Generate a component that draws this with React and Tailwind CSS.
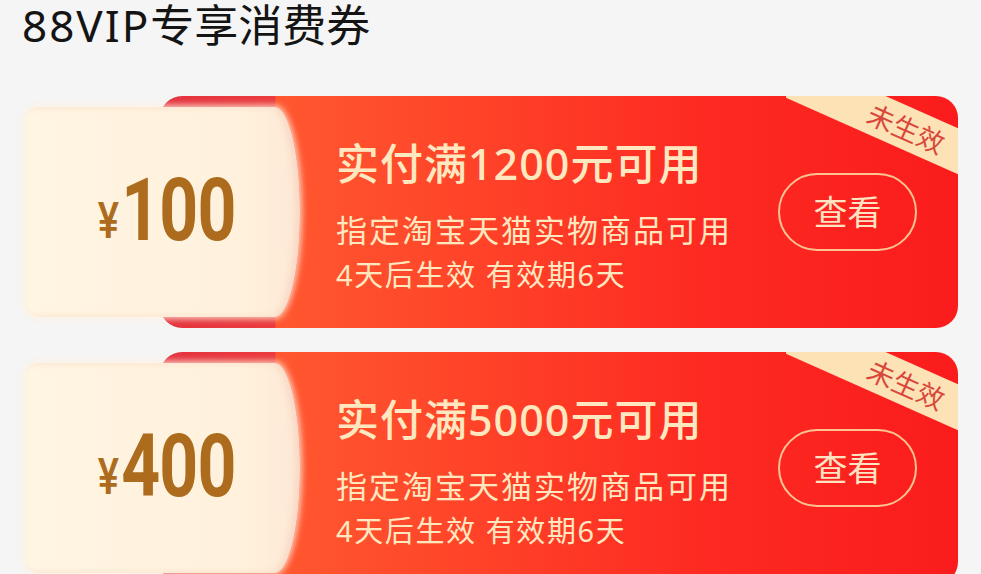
import React from 'react';

const coupons = [
  { amount: '100', threshold: '1200' },
  { amount: '400', threshold: '5000' },
];

function Ribbon() {
  return (
    <div className="absolute top-0 right-0 w-[172px] h-[82px] overflow-hidden rounded-tr-[22px] pointer-events-none">
      <div className="absolute left-[-12px] top-[8px] w-[250px] h-[42px] rotate-[24deg] bg-[#fde2b6] flex items-center justify-center">
        <span className="ml-[16px] text-[27px] leading-none text-[#d8473a]">未生效</span>
      </div>
    </div>
  );
}

function Coupon({ amount, threshold }) {
  return (
    <div className="relative ml-[160px] mr-[23px] h-[232px] shrink-0 rounded-[22px] flex items-center bg-[linear-gradient(to_right,#e4323f_0px,#ec3b3d_115px,#ff5830_116px,#ff4429_38%,#fd2a22_68%,#fa1c1c_100%)]">
      {/* cream stub on the left */}
      <div className="-ml-[135px] w-[275px] h-[210px] shrink-0 flex items-center justify-center pl-[22px] rounded-l-[14px] rounded-tr-[25px_105px] rounded-br-[25px_105px] bg-[linear-gradient(to_right,#fff5e3,#fff1dc_80%,#fde8d6)] shadow-[inset_-4px_0_6px_rgba(236,160,140,0.25),0_0_6px_2px_rgba(255,243,224,0.8)]">
        <div className="flex items-end text-[#ad6b1d] font-['Roboto',sans-serif] -mt-[2px]">
          <span className="text-[50px] leading-none font-medium inline-block scale-x-[0.8] mb-[1px]">¥</span>
          <span className="text-[87px] leading-[0.82] font-bold inline-block scale-x-[0.78] -ml-[16px] tracking-[-1px]">{amount}</span>
        </div>
      </div>

      <div className="flex-1 self-start pt-[42px] pl-[36px] text-[#ffe8c0]">
        <div className="text-[43px] leading-[52px] font-medium tracking-[1px] whitespace-nowrap">实付满{threshold}元可用</div>
        <div className="mt-[20px] text-[31px] leading-[40px] tracking-[2px] whitespace-nowrap">指定淘宝天猫实物商品可用</div>
        <div className="mt-[5px] text-[29px] leading-[40px] tracking-[1.6px] whitespace-nowrap">4天后生效 有效期6天</div>
      </div>

      <button className="mr-[41px] w-[139px] h-[78px] shrink-0 rounded-full border-2 border-[#ffc293] text-[34px] leading-none text-[#ffe3c2] flex items-center justify-center">
        查看
      </button>

      <Ribbon />
    </div>
  );
}

export default function App() {
  return (
    <div className="min-h-screen bg-[#f5f5f5] font-['Noto_Sans','Noto_Sans_CJK_SC',sans-serif] overflow-hidden">
      <h1 className="pl-[22px] text-[44px] leading-[50px] font-normal text-[#141414]">
        <span className="tracking-[2px]">88VIP</span>专享消费券
      </h1>
      <div className="mt-[46px] flex flex-col gap-[24px]">
        {coupons.map((c) => (
          <Coupon key={c.amount} amount={c.amount} threshold={c.threshold} />
        ))}
      </div>
    </div>
  );
}
